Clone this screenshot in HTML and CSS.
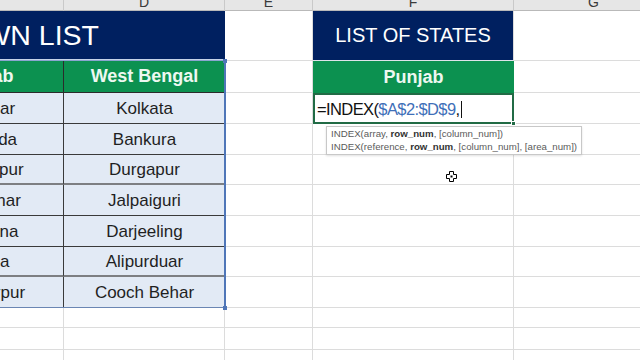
FILE: index.html
```html
<!DOCTYPE html>
<html>
<head>
<meta charset="utf-8">
<link rel="stylesheet" href="styles.css">
</head>
<body>
<div class="viewport">
  <div class="sheet">
    <div class="colhead"><span>C</span></div>
    <div class="colhead"><span>D</span></div>
    <div class="colhead"><span>E</span></div>
    <div class="colhead"><span>F</span></div>
    <div class="colhead"><span>G</span></div>

    <div class="title title-left">DROPDOWN LIST</div>
    <div class="cell"></div>
    <div class="title">LIST OF STATES</div>
    <div class="cell"></div>

    <div class="green gc">Punjab</div>
    <div class="green gd">West Bengal</div>
    <div class="cell"></div>
    <div class="green gf">Punjab</div>
    <div class="cell"></div>

    <div class="data dc">Amritsar</div>
    <div class="data dd">Kolkata</div>
    <div class="cell"></div>
    <div class="edit"><span>=INDEX(</span><span class="ref">$A$2:$D$9</span><span class="comma">,</span><span class="caret"></span><i class="edit-handle"></i></div>
    <div class="cell"></div>

    <div class="data dc">Bathinda</div>
    <div class="data dd">Bankura</div>
    <div class="cell"></div>
    <div class="cell"></div>
    <div class="cell"></div>

    <div class="data dc thick">Gurdaspur</div>
    <div class="data dd thick">Durgapur</div>
    <div class="cell"></div>
    <div class="cell"></div>
    <div class="cell"></div>

    <div class="data dc">Jalandhar</div>
    <div class="data dd">Jalpaiguri</div>
    <div class="cell"></div>
    <div class="cell"></div>
    <div class="cell"></div>

    <div class="data dc">Ludhiana</div>
    <div class="data dd">Darjeeling</div>
    <div class="cell"></div>
    <div class="cell"></div>
    <div class="cell"></div>

    <div class="data dc thick">Patiala</div>
    <div class="data dd thick">Alipurduar</div>
    <div class="cell"></div>
    <div class="cell"></div>
    <div class="cell"></div>

    <div class="data dc last">Hoshiarpur</div>
    <div class="data dd last">Cooch Behar</div>
    <div class="cell"></div>
    <div class="cell"></div>
    <div class="cell"></div>

    <div class="cell"></div><div class="cell"></div><div class="cell"></div><div class="cell"></div><div class="cell"></div>
    <div class="cell"></div><div class="cell"></div><div class="cell"></div><div class="cell"></div><div class="cell"></div>
    <div class="cell"></div><div class="cell"></div><div class="cell"></div><div class="cell"></div><div class="cell"></div>
  </div>

  <div class="range"><i class="h h-top"></i><i class="h h-bot"></i></div>

  <div class="tooltip">
    <div>INDEX(array, <b>row_num</b>, [column_num])</div>
    <div>INDEX(reference, <b>row_num</b>, [column_num], [area_num])</div>
  </div>

  <svg class="cursor" width="11" height="11" viewBox="0 0 11 11">
    <path d="M3.5 0.5 H7.5 V3.5 H10.5 V7.5 H7.5 V10.5 H3.5 V7.5 H0.5 V3.5 H3.5 Z" fill="#fff" stroke="#000" stroke-width="1"/>
    <rect x="4.5" y="4.5" width="2" height="2" fill="#000"/>
  </svg>
</div>
</body>
</html>
```

FILE: styles.css
```css
html, body {
  margin: 0;
  padding: 0;
  background: #fff;
}
body {
  width: 640px;
  height: 360px;
  overflow: hidden;
  font-family: "Liberation Sans", Arial, sans-serif;
}
.viewport {
  position: relative;
  width: 640px;
  height: 360px;
  overflow: hidden;
}
.sheet {
  display: grid;
  margin-left: -96px;
  width: max-content;
  grid-template-columns: 160px 161px 88px 201px 160px;
  grid-template-rows: 11px 50px 32px 31px 31px 30px 31px 31px 30px 31px 20px 22px 22px;
}
.sheet > div {
  box-sizing: border-box;
}
.cell {
  border-right: 1px solid #dcdcdc;
  border-bottom: 1px solid #dcdcdc;
}
.colhead {
  background: #e6e6e6;
  border-right: 1px solid #c9c9c9;
  border-bottom: 1px solid #b9b9b9;
  overflow: hidden;
  display: flex;
  justify-content: center;
  align-items: flex-start;
  color: #3a3a3a;
  font-size: 14px;
}
.colhead span {
  line-height: 14px;
  margin-top: -5px;
}
.title {
  background: #002060;
  color: #fff;
  font-size: 20px;
  display: flex;
  align-items: center;
  justify-content: center;
  border-bottom: 1px solid #dfe3ea;
  border-right: 1px solid #dcdcdc;
}
.title-left {
  grid-column: 1 / 3;
  justify-content: flex-end;
  padding-right: 126px;
  padding-top: 1px;
  font-size: 28.5px;
  white-space: nowrap;
  overflow: hidden;
  border-right: none;
  border-bottom: 2px solid #c5d3e8;
}
.green {
  background: #0c9150;
  color: #eef8f1;
  font-weight: bold;
  font-size: 18px;
  display: flex;
  align-items: center;
  justify-content: center;
  white-space: nowrap;
  border-bottom: 1px solid #2b2b2b;
}
.gc {
  border-right: 1px solid #2b2b2b;
}
.gf {
  border-bottom: none;
}
.data {
  background: #e2eaf5;
  color: #1f1f1f;
  font-size: 17px;
  display: flex;
  align-items: center;
  justify-content: center;
  white-space: nowrap;
  padding-top: 2px;
  border-bottom: 1px solid #3a3a3a;
}
.dc {
  border-right: 1px solid #3a3a3a;
}
.data.thick {
  border-bottom: 2px solid #7d7f82;
}
.data.last {
  border-bottom: 1px solid #7c8ba3;
}
.edit {
  position: relative;
  border: 2px solid #216b45;
  background: #fff;
  display: flex;
  align-items: center;
  padding-left: 2px;
  padding-top: 1px;
  font-size: 16.5px;
  letter-spacing: -0.6px;
  color: #111;
  white-space: nowrap;
}
.edit .ref {
  color: #3f6fb8;
}
.edit .comma {
  letter-spacing: 0;
}
.edit .caret {
  display: inline-block;
  width: 1px;
  height: 17px;
  background: #111;
  margin-left: 1px;
}
.edit-handle {
  position: absolute;
  right: -4px;
  bottom: -4px;
  width: 5px;
  height: 5px;
  background: #216b45;
  border: 1px solid #fff;
  box-sizing: border-box;
}
.range {
  position: absolute;
  left: -20px;
  top: 60px;
  width: 246px;
  height: 248px;
  box-sizing: border-box;
  border: 1px solid #8aa5cf;
  border-right: 2px solid #4f76b8;
  border-bottom: 1px solid #6a86b3;
  pointer-events: none;
}
.h {
  position: absolute;
  width: 4px;
  height: 4px;
  background: #4f76b8;
}
.h-top {
  right: -3px;
  top: -2px;
}
.h-bot {
  right: -3px;
  bottom: -3px;
}
.tooltip {
  position: absolute;
  left: 326px;
  top: 126px;
  width: 256px;
  height: 29px;
  box-sizing: border-box;
  background: #fff;
  border: 1px solid #c8c8c8;
  box-shadow: 0 1px 2px rgba(0,0,0,0.12);
  padding: 1px 0 0 4px;
  font-size: 9.7px;
  line-height: 12.5px;
  color: #5a5a5a;
  white-space: nowrap;
}
.tooltip b {
  color: #333;
}
.cursor {
  position: absolute;
  left: 446px;
  top: 171px;
}
```
